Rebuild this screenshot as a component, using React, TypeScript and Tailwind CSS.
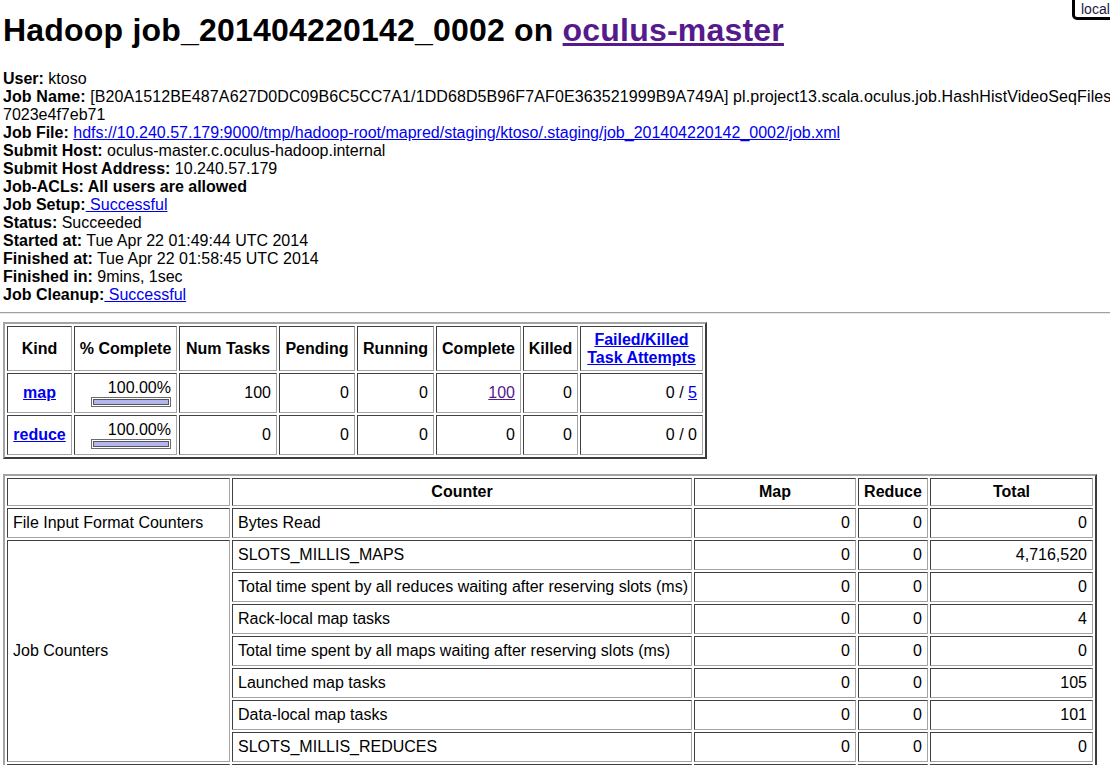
import React from "react";

const cell =
  "border border-solid border-t-[#404040] border-l-[#404040] border-r-[#a4a4a4] border-b-[#a4a4a4] px-[5px] flex items-center leading-[18px]";
const outer =
  "grid w-fit gap-[2px] p-[2px] border-2 border-solid border-t-[#a4a4a4] border-l-[#a4a4a4] border-r-[#3c3c3c] border-b-[#3c3c3c]";
const blue = "text-[#0000ee] underline";
const purple = "text-[#551a8b] underline";

function Bar() {
  return (
    <div className="w-[80px] h-[10px] border border-solid border-[#6a6a6a] p-[1px] bg-white">
      <div className="h-full w-full bg-[#b4b4ee] border border-solid border-[#555]" />
    </div>
  );
}

function Info({
  label,
  children,
  extra = "",
}: {
  label: string;
  children?: React.ReactNode;
  extra?: string;
}) {
  return (
    <div className={`whitespace-nowrap h-[18px] leading-[18px] ${extra}`}>
      <b>{label}</b>
      {children}
    </div>
  );
}

export default function App() {
  const jobRows: [string, string, string, string][] = [
    ["SLOTS_MILLIS_MAPS", "0", "0", "4,716,520"],
    ["Total time spent by all reduces waiting after reserving slots (ms)", "0", "0", "0"],
    ["Rack-local map tasks", "0", "0", "4"],
    ["Total time spent by all maps waiting after reserving slots (ms)", "0", "0", "0"],
    ["Launched map tasks", "0", "0", "105"],
    ["Data-local map tasks", "0", "0", "101"],
    ["SLOTS_MILLIS_REDUCES", "0", "0", "0"],
  ];
  return (
    <div className="relative w-[1110px] h-[765px] overflow-hidden bg-white text-black font-['Liberation_Sans',Arial,sans-serif] text-[16px] pl-[3px]">
      <h1 className="mt-[12px] text-[32px] font-bold leading-[37px] whitespace-nowrap tracking-[0.2px]">
        Hadoop job_201404220142_0002 on <span className={purple}>oculus-master</span>
      </h1>

      <div className="mt-[21px] w-[1400px]">
        <Info label="User:"> ktoso</Info>
        <Info label="Job Name:" extra="tracking-[0.1px]">
          {" "}[B20A1512BE487A627D0DC09B6C5CC7A1/1DD68D5B96F7AF0E363521999B9A749A] pl.project13.scala.oculus.job.HashHistVideoSeqFiles
        </Info>
        <div className="h-[18px] leading-[18px]">7023e4f7eb71</div>
        <Info label="Job File:">
          {" "}
          <span className={blue}>
            hdfs://10.240.57.179:9000/tmp/hadoop-root/mapred/staging/ktoso/.staging/job_201404220142_0002/job.xml
          </span>
        </Info>
        <Info label="Submit Host:"> oculus-master.c.oculus-hadoop.internal</Info>
        <Info label="Submit Host Address:"> 10.240.57.179</Info>
        <Info label="Job-ACLs: All users are allowed" />
        <Info label="Job Setup:">
          <span className={blue}> Successful</span>
        </Info>
        <Info label="Status:"> Succeeded</Info>
        <Info label="Started at:"> Tue Apr 22 01:49:44 UTC 2014</Info>
        <Info label="Finished at:"> Tue Apr 22 01:58:45 UTC 2014</Info>
        <Info label="Finished in:"> 9mins, 1sec</Info>
        <Info label="Job Cleanup:">
          <span className={blue}> Successful</span>
        </Info>
      </div>

      <div className="mt-[8px] -ml-[3px] w-[1110px] h-[2px] border-t border-b border-solid border-t-[#a0a0a0] border-b-[#e8e8e8]" />

      {/* Task summary table */}
      <div
        className={`${outer} mt-[8px] grid-cols-[65px_103px_98px_76px_77px_85px_55px_123px] grid-rows-[45px_40px_40px]`}
      >
        {["Kind", "% Complete", "Num Tasks", "Pending", "Running", "Complete", "Killed"].map((h) => (
          <div key={h} className={`${cell} justify-center font-bold whitespace-nowrap`}>
            {h}
          </div>
        ))}
        <div className={`${cell} justify-center font-bold text-center`}>
          <span className={blue}>
            Failed/Killed
            <br />
            Task Attempts
          </span>
        </div>

        {/* map row */}
        <div className={`${cell} justify-center font-bold`}>
          <span className={blue}>map</span>
        </div>
        <div className={`${cell} flex-col !items-end justify-center`}>
          <div className="leading-[18px]">100.00%</div>
          <Bar />
        </div>
        <div className={`${cell} justify-end`}>100</div>
        <div className={`${cell} justify-end`}>0</div>
        <div className={`${cell} justify-end`}>0</div>
        <div className={`${cell} justify-end`}>
          <span className={purple}>100</span>
        </div>
        <div className={`${cell} justify-end`}>0</div>
        <div className={`${cell} justify-end whitespace-pre`}>
          0 / <span className={blue}>5</span>
        </div>

        {/* reduce row */}
        <div className={`${cell} justify-center font-bold`}>
          <span className={blue}>reduce</span>
        </div>
        <div className={`${cell} flex-col !items-end justify-center`}>
          <div className="leading-[18px]">100.00%</div>
          <Bar />
        </div>
        <div className={`${cell} justify-end`}>0</div>
        <div className={`${cell} justify-end`}>0</div>
        <div className={`${cell} justify-end`}>0</div>
        <div className={`${cell} justify-end`}>0</div>
        <div className={`${cell} justify-end`}>0</div>
        <div className={`${cell} justify-end whitespace-pre`}>0 / 0</div>
      </div>

      {/* Counters table */}
      <div
        className={`${outer} mt-[15px] grid-cols-[223px_460px_162px_70px_163px] grid-rows-[28px_30px_30px_30px_30px_30px_30px_30px_30px_30px]`}
      >
        <div className={cell} />
        <div className={`${cell} justify-center font-bold`}>Counter</div>
        <div className={`${cell} justify-center font-bold`}>Map</div>
        <div className={`${cell} justify-center font-bold`}>Reduce</div>
        <div className={`${cell} justify-center font-bold`}>Total</div>

        <div className={cell}>File Input Format Counters</div>
        <div className={cell}>Bytes Read</div>
        <div className={`${cell} justify-end`}>0</div>
        <div className={`${cell} justify-end`}>0</div>
        <div className={`${cell} justify-end`}>0</div>

        <div className={`${cell} row-span-7`}>Job Counters</div>
        {jobRows.map(([name, m, r, t]) => (
          <React.Fragment key={name}>
            <div className={`${cell} whitespace-nowrap`}>{name}</div>
            <div className={`${cell} justify-end`}>{m}</div>
            <div className={`${cell} justify-end`}>{r}</div>
            <div className={`${cell} justify-end`}>{t}</div>
          </React.Fragment>
        ))}
        <div className={cell} />
        <div className={cell} />
        <div className={cell} />
        <div className={cell} />
        <div className={cell} />
      </div>

      {/* "local" overlay tag */}
      <div className="absolute left-[1072px] top-[-6px] w-[60px] h-[26px] border-[3px] border-solid border-black rounded-bl-[5px] bg-white pl-[6px] pt-[5px] text-[14px] leading-[14px] text-[#1a1a40]">
        local
      </div>
    </div>
  );
}
